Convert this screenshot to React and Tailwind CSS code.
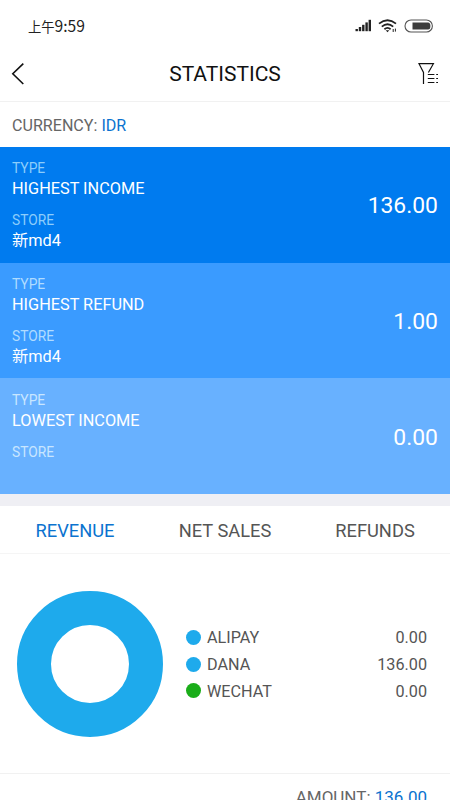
/* ═══════════════════════════════════════════
   DATA
═══════════════════════════════════════════ */
const cards = [
  { type: "HIGHEST INCOME", store: "新md4", value: "136.00", bg: "bg-[#007bef]", label: "text-[#8ccdfb]" },
  { type: "HIGHEST REFUND", store: "新md4", value: "1.00", bg: "bg-[#3a9bff]", label: "text-[#b0dcff]" },
  { type: "LOWEST INCOME", store: "", value: "0.00", bg: "bg-[#68b1ff]", label: "text-[#c8e6ff]" },
];

const tabs = ["REVENUE", "NET SALES", "REFUNDS"];

const channels = [
  { name: "ALIPAY", value: "0.00", dot: "bg-[#1eaaec]" },
  { name: "DANA", value: "136.00", dot: "bg-[#1eaaec]" },
  { name: "WECHAT", value: "0.00", dot: "bg-[#1aad19]" },
];

/* ═══════════════════════════════════════════
   STATUS BAR
═══════════════════════════════════════════ */
function StatusBar() {
  return (
    <div className="h-[46px] pt-[3px] pl-[28px] pr-[16px] flex items-center justify-between text-[#222]">
      <span className="pt-[2px] text-[15.6px] leading-[22px] font-['Noto_Sans_CJK_SC',sans-serif]">
        <span className="text-[13.3px]">上午</span>9:59
      </span>
      <div className="flex items-center pt-[2px]">
        {/* Signal */}
        <svg width="17" height="13" viewBox="0 0 17 13" fill="#222">
          <rect x="0.5" y="10" width="2.4" height="2.2" />
          <rect x="3.8" y="8" width="2.4" height="4.2" />
          <rect x="7.1" y="5.8" width="2.4" height="6.4" />
          <rect x="10.4" y="3.4" width="2.4" height="8.8" />
          <rect x="13.6" y="0.8" width="2.4" height="11.4" />
        </svg>
        {/* Wifi */}
        <svg className="ml-[6px]" width="20" height="14" viewBox="0 0 20 14" fill="none" stroke="#222" strokeWidth="1.8">
          <path d="M1 4.6 Q9.5 -2.2 18 4.6" />
          <path d="M3.8 7.6 Q9.5 2.8 15.2 7.6" />
          <path d="M6.4 10.2 Q9.5 7.6 12.6 10.2" />
          <path d="M7.7 11.2 H11.3 L9.5 13.2 Z" fill="#222" stroke="none" />
          <path d="M15.2 10 V13 M17.4 9.6 V12.6" strokeWidth="1" />
        </svg>
        {/* Battery */}
        <svg className="ml-[6px]" width="30" height="14" viewBox="0 0 30 14">
          <rect x="1" y="1" width="27.4" height="12" rx="6" fill="#fff" stroke="#555" strokeWidth="1.1" />
          <path d="M8.5 3.4 H24 Q26.4 3.4 26.4 7 Q26.4 10.6 24 10.6 H8.5 Z" fill="#3c3c3c" />
        </svg>
      </div>
    </div>
  );
}

/* ═══════════════════════════════════════════
   HEADER
═══════════════════════════════════════════ */
function Header() {
  return (
    <header className="h-[56px] px-[11px] flex items-center justify-between border-b border-[#f1f1f1]">
      <svg width="24" height="24" viewBox="0 0 24 24" fill="none" stroke="#111" strokeWidth="1.6">
        <path d="M12.3 1.6 L1.8 11.8 L12.3 22" />
      </svg>
      <h1 className="pt-[2px] text-[21px] text-[#111]">STATISTICS</h1>
      <svg width="24" height="24" viewBox="0 0 24 24" fill="none" stroke="#111" strokeWidth="1.2">
        <path d="M8.5 22 V10.5 L4 1.7 H18.4 L13.4 10.5" />
        <path d="M12.8 12.5 H19.4 M12.8 16.5 H19.4 M12.8 20.5 H19.4" />
        <path d="M21.2 12.5 H23 M21.2 16.5 H23 M21.2 20.5 H23" />
      </svg>
    </header>
  );
}

function StatCard({ card }) {
  return (
    <section className={`flex-1 px-[12px] flex items-center justify-between text-white ${card.bg}`}>
      <div className="h-full pt-[12.4px]">
        <p className={`text-[13.8px] leading-[19px] ${card.label}`}>TYPE</p>
        <p className="text-[16.3px] leading-[22px]">{card.type}</p>
        <p className={`mt-[11px] text-[13.8px] leading-[19px] ${card.label}`}>STORE</p>
        <p className="text-[16.3px] leading-[22px]">{card.store}</p>
      </div>
      <span className="pt-[3.4px] text-[22.9px]">{card.value}</span>
    </section>
  );
}

/* ═══════════════════════════════════════════
   PAGE
═══════════════════════════════════════════ */
export default function App() {
  return (
    <div className="w-[450px] h-[800px] overflow-hidden flex flex-col bg-white font-['Roboto','Noto_Sans_CJK_SC',sans-serif]">
      <StatusBar />
      <Header />

      <div className="h-[45px] pt-[3px] px-[12px] flex items-center text-[16.1px] text-[#666]">
        <span>
          CURRENCY: <span className="text-[#0b73cf]">IDR</span>
        </span>
      </div>

      <div className="h-[347px] flex flex-col">
        {cards.map((card) => (
          <StatCard key={card.type} card={card} />
        ))}
      </div>

      <div className="h-[12px] bg-[#efeff4]" />

      <nav className="h-[48px] grid grid-cols-3 items-center border-b border-[#f5f5f5] text-center text-[18.3px] text-[#555]">
        {tabs.map((tab, i) => (
          <span key={tab} className={i === 0 ? "pt-[2px] text-[#0b73cf]" : "pt-[2px]"}>
            {tab}
          </span>
        ))}
      </nav>

      <div className="h-[219px] pl-[17px] pr-[23px] flex items-center">
        <div className="size-[146px] rounded-full border-[34.2px] border-[#1eaaec]" />
        <ul className="ml-[23px] pt-px flex-1 text-[16.2px] text-[#555]">
          {channels.map((c) => (
            <li key={c.name} className="h-[26.7px] flex items-center">
              <span className={`size-[15px] rounded-full ${c.dot}`} />
              <span className="ml-[6px] pt-[2px] flex-1">{c.name}</span>
              <span className="pt-[2px]">{c.value}</span>
            </li>
          ))}
        </ul>
      </div>

      <footer className="h-[27px] shrink-0 pt-[11px] pr-[23px] border-t border-[#f1f1f1] text-right text-[17px] leading-[25px] text-[#666]">
        AMOUNT: <span className="text-[#0b73cf]">136.00</span>
      </footer>
    </div>
  );
}
